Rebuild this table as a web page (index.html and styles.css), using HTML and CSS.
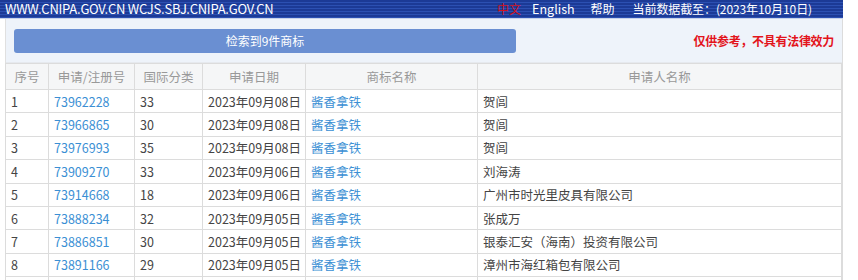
FILE: index.html
```html
<!DOCTYPE html>
<html lang="zh">
<head>
<meta charset="utf-8">
<link rel="stylesheet" href="styles.css">
</head>
<body>
<div class="topbar">
  <span class="domain">WWW.CNIPA.GOV.CN WCJS.SBJ.CNIPA.GOV.CN</span>
  <nav class="topnav">
    <span class="lang-cn">中文</span>
    <span class="nav-en">English</span>
    <span class="nav-help">帮助</span>
    <span class="nav-date">当前数据截至：(2023年10月10日)</span>
  </nav>
</div>
<div class="page">
  <div class="panel">
    <div class="result-btn">检索到9件商标</div>
    <div class="notice">仅供参考，不具有法律效力</div>
  </div>
  <table class="grid">
    <colgroup>
      <col class="c1"><col class="c2"><col class="c3"><col class="c4"><col class="c5"><col class="c6">
    </colgroup>
    <thead>
      <tr><th>序号</th><th>申请/注册号</th><th>国际分类</th><th>申请日期</th><th>商标名称</th><th>申请人名称</th></tr>
    </thead>
    <tbody>
      <tr><td>1</td><td class="link">73962228</td><td>33</td><td>2023年09月08日</td><td class="link">酱香拿铁</td><td>贺闾</td></tr>
      <tr><td>2</td><td class="link">73966865</td><td>30</td><td>2023年09月08日</td><td class="link">酱香拿铁</td><td>贺闾</td></tr>
      <tr><td>3</td><td class="link">73976993</td><td>35</td><td>2023年09月08日</td><td class="link">酱香拿铁</td><td>贺闾</td></tr>
      <tr><td>4</td><td class="link">73909270</td><td>33</td><td>2023年09月06日</td><td class="link">酱香拿铁</td><td>刘海涛</td></tr>
      <tr><td>5</td><td class="link">73914668</td><td>18</td><td>2023年09月06日</td><td class="link">酱香拿铁</td><td>广州市时光里皮具有限公司</td></tr>
      <tr><td>6</td><td class="link">73888234</td><td>32</td><td>2023年09月05日</td><td class="link">酱香拿铁</td><td>张成万</td></tr>
      <tr><td>7</td><td class="link">73886851</td><td>30</td><td>2023年09月05日</td><td class="link">酱香拿铁</td><td>银泰汇安（海南）投资有限公司</td></tr>
      <tr><td>8</td><td class="link">73891166</td><td>29</td><td>2023年09月05日</td><td class="link">酱香拿铁</td><td>漳州市海红箱包有限公司</td></tr>
      <tr><td></td><td></td><td></td><td></td><td></td><td></td></tr>
    </tbody>
  </table>
</div>
</body>
</html>
```
FILE: styles.css
```css
html, body {
  margin: 0;
  padding: 0;
  background: #fff;
  font-family: "Noto Sans CJK SC", "Noto Sans", sans-serif;
  color: #333;
  overflow: hidden;
}
.topbar {
  width: 843px;
  height: 19px;
  box-sizing: border-box;
  padding: 0 31px 0 5px;
  display: flex;
  align-items: center;
  justify-content: space-between;
  white-space: nowrap;
  color: #fff;
  font-size: 13px;
  line-height: 18px;
  background: repeating-linear-gradient(to bottom, #1c3a96 0, #1c3a96 2px, #2c50b2 2px, #2c50b2 3px);
  border-bottom: 1px solid #c8d3ea;
}
.domain {
  flex-shrink: 0;
  letter-spacing: -0.25px;
}
.topnav {
  display: flex;
  flex-shrink: 0;
  font-size: 12px;
}
.lang-cn {
  color: #d0121c;
  margin-right: 11px;
}
.nav-en {
  font-size: 12.5px;
  margin-right: 16px;
}
.nav-help { margin-right: 18px; }
.nav-date { letter-spacing: -0.1px; }
.page {
  margin-left: 5px;
  width: 838px;
  border-left: 1px solid #e0e0e0;
  border-right: 1px solid #dcdcdc;
  box-sizing: border-box;
}
.panel {
  height: 44px;
  background: #eef3fa;
  display: flex;
  align-items: center;
  padding-left: 8px;
  box-sizing: border-box;
  border-bottom: 1px solid #e6e9ee;
}
.result-btn {
  width: 502px;
  height: 24px;
  background: #6a8fd2;
  border-radius: 3px;
  color: #fff;
  font-size: 12px;
  line-height: 24px;
  text-align: center;
}
.notice {
  margin-left: auto;
  margin-right: 8px;
  color: #e3141c;
  font-size: 12px;
  font-weight: bold;
  letter-spacing: -0.3px;
}
.grid {
  width: 836px;
  margin-left: -1px;
  border-collapse: collapse;
  table-layout: fixed;
  font-size: 12.5px;
}
.grid .c1 { width: 43px; }
.grid .c2 { width: 86px; }
.grid .c3 { width: 68px; }
.grid .c4 { width: 103px; }
.grid .c5 { width: 172px; }
.grid .c6 { width: 364px; }
.grid th, .grid td {
  border: 1px solid #dcdcdc;
  padding: 0 0 0 5px;
  white-space: nowrap;
  overflow: hidden;
}
.grid th {
  height: 25px;
  background: #f5f6f7;
  color: #999;
  font-weight: normal;
  text-align: center;
  padding: 0;
}
.grid td {
  height: 22.4px;
  text-align: left;
  color: #444;
}
.grid td.link {
  color: #3a8fd4;
}
```
